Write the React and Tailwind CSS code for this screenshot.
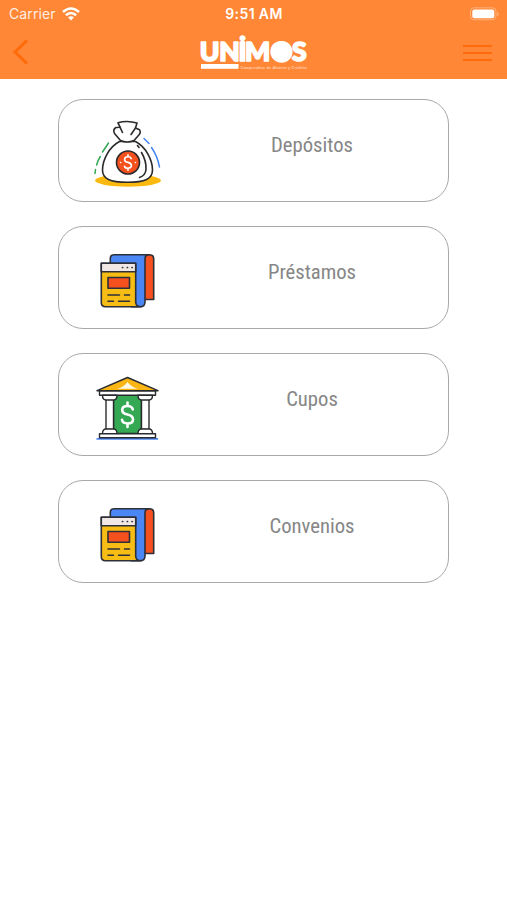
const UnimosLogo = () => (
  <svg
    viewBox="198.5 34 112 37"
    className="w-28 h-[37px]"
    fill="#fff"
    stroke="#fff"
    strokeLinejoin="round"
  >
    <text
      y="61.4"
      x="200.3 219.8 239 245.5 271 292.4"
      fontFamily="Lato, sans-serif"
      fontWeight="900"
      fontSize="26.5"
      strokeWidth="1.7"
    >
      UNİMOS
    </text>
    <circle cx="282.1" cy="51.9" r="10.9" stroke="none" />
    <rect x="201.5" y="64" width="37.5" height="4.8" stroke="none" />
    <text
      x="241"
      y="68.6"
      fontFamily="Lato, sans-serif"
      fontSize="4.2"
      stroke="none"
      opacity="0.75"
      textLength="66"
    >
      Cooperativa de Ahorro y Crédito
    </text>
  </svg>
);

const MoneyBagIcon = () => (
  <svg viewBox="0 0 85 85" className="size-[85px]" fill="none" strokeLinecap="round" strokeLinejoin="round">
    <ellipse cx="43" cy="68.5" rx="33" ry="6.2" fill="#fbb80f" />
    <path d="M23.5 31L17.5 40M15.3 44.5Q12.5 49 11.6 53M10.5 57.5L10 61.5" stroke="#34a853" strokeWidth="1.5" />
    <path d="M59 26.5L64 31.5M66.5 35.5Q72.5 44 74.5 55" stroke="#4285f4" strokeWidth="1.5" />
    <g stroke="#2b2b2d" strokeWidth="1.6">
      <path
        fill="#fff"
        d="M34.5 29.5C24 35 17.5 48 17.5 58C17.5 67 25 70.3 42.5 70.3C60 70.3 67.5 67 67.5 58C67.5 48 61 35 50.5 29.5Z"
      />
      <path
        fill="#fff"
        d="M35.5 28.5L29.5 21.5Q27.5 17.5 31 15.5L35 15.2L33 10.8Q42 8 52 11L50.5 16L54.5 17.7Q56.5 21 53 24L49 28.5Q42 31.5 35.5 28.5Z"
      />
      <path d="M35 15.2L37.5 20.5M50.5 16L46 22.5" />
      <path d="M52.5 33.5L54 35.5M56.5 40.5Q61.5 49 61 57.5Q60.5 63.5 54.5 65.5" />
      <circle cx="43" cy="50.5" r="11.5" fill="#f4511e" />
    </g>
    <path
      d="M46.3 46.6Q45.5 44.8 43 44.8Q39.6 44.8 39.6 47.4Q39.6 49.8 43 50.4Q46.4 51.2 46.4 53.6Q46.4 56.2 43 56.2Q40 56.2 39.5 54.2M43 42.7V44.8M43 56.2V58.3"
      stroke="#fff"
      strokeWidth="1.6"
    />
    <path d="M35.5 50.5H35.7M50.3 50.5H50.5" stroke="#fff" strokeWidth="1.5" />
  </svg>
);

const BookIcon = () => (
  <svg viewBox="0 -1 85 85" className="size-[85px]" fill="none" strokeLinecap="round" strokeLinejoin="round">
    <g stroke="#2d3038" strokeWidth="1.6">
      <path d="M58 14.7H64.5Q68.7 14.7 68.7 19V59.5H58Z" fill="#f4511e" />
      <path d="M29 14.7H64Q60 14.7 60 19V62Q60 66.7 55 66.7H47L25.3 60V18.5Q25.3 14.7 29 14.7Z" fill="#4b86f5" />
      <path d="M16.3 23.3H50.7V62Q50.7 66.7 56 66.7H20.5Q16.3 66.7 16.3 62.5Z" fill="#f7bd15" />
      <path d="M16.3 23.3H50.7V31.7H16.3Z" fill="#f1e8e5" />
      <path d="M23 37.5H44.5V48.3H23Z" fill="#f4511e" />
      <path d="M23 55H34.5M39.5 55H44.5M23 61.3H28.5M33.5 61.3H44.5" />
    </g>
    <path d="M37.5 27.5H37.7M42.3 27.5H42.5M47 27.5H47.2" stroke="#2d3038" strokeWidth="1.7" />
  </svg>
);

const BankIcon = () => (
  <svg viewBox="0 1 85 85" className="size-[85px]" fill="none" strokeLinejoin="round">
    <path d="M11.5 73.9H73" stroke="#4b86f5" strokeWidth="1.6" />
    <g stroke="#292b2e" strokeWidth="1.4">
      <path d="M28.5 30H56.5V68.5H28.5Z" fill="#34a853" />
      <path d="M12 25.7L42.5 12.5L73 25.7Z" fill="#fbb515" />
      <path d="M14.5 26H70.5V30.3H14.5Z" fill="#fff" />
      <path d="M21 34H28.5V64.5H21ZM56.5 34H64V64.5H56.5Z" fill="#fff" />
      <path d="M17.5 30.3H32Q32 35 28.5 35H21Q17.5 35 17.5 30.3ZM53 30.3H67.5Q67.5 35 64 35H56.5Q53 35 53 30.3Z" fill="#fff" />
      <path d="M17.5 68.8Q17.5 64 21 64H28.5Q32 64 32 68.8ZM53 68.8Q53 64 56.5 64H64Q67.5 64 67.5 68.8Z" fill="#fff" />
      <path d="M14.5 68.8H70.5V72.8H14.5Z" fill="#fff" />
    </g>
    <path d="M32 23.8Q39 22 42.5 17Q46 22 53 23.8Z" fill="#fff8e4" />
    <path
      d="M47.8 44.5Q47 41 42.5 41Q37.2 41 37.2 45Q37.2 48.5 42.5 49.5Q48 50.7 48 54.5Q48 58.5 42.5 58.5Q37.5 58.5 37 54.7M42.5 37.5V41M42.5 58.5V62"
      stroke="#fff"
      strokeWidth="2.6"
      strokeLinecap="round"
    />
  </svg>
);

const products = [
  { id: "depositos", title: "Depósitos", icon: <MoneyBagIcon /> },
  { id: "prestamos", title: "Préstamos", icon: <BookIcon /> },
  { id: "cupos", title: "Cupos", icon: <BankIcon /> },
  { id: "convenios", title: "Convenios", icon: <BookIcon /> },
];

const StatusBar = () => (
  <div className="grid grid-cols-3 items-center h-[27px] pl-[9px] pr-2 font-['Inter',sans-serif] text-white">
    <div className="flex items-center gap-1.5">
      <span className="text-[14px] tracking-[0.1px] opacity-85">Carrier</span>
      <svg viewBox="0 0 18 14" className="w-[18px] h-3.5" fill="none" stroke="#fff" strokeWidth="2.6">
        <path d="M1 5Q9 -2 17 5M3.9 8.2Q9 3.8 14.1 8.2" />
        <path d="M6 10.3Q9 8 12 10.3L9 13.5Z" fill="#fff" stroke="none" />
      </svg>
    </div>
    <span className="text-center text-[14px] font-semibold tracking-[0.4px]">9:51 AM</span>
    <svg viewBox="0 0 30 14" className="w-[30px] h-3.5 justify-self-end">
      <rect x="1.5" y="0.8" width="25.5" height="12" rx="3.5" fill="none" stroke="#fff" strokeOpacity="0.35" />
      <rect x="3.3" y="2.4" width="22" height="8.8" rx="2" fill="#fff" />
      <path d="M28.2 5V9Q29.7 8.3 29.7 7T28.2 5Z" fill="#fff" fillOpacity="0.4" />
    </svg>
  </div>
);

const ProductCard = ({ title, icon }) => (
  <button className="flex w-full h-[103px] pl-[26px] pt-3 rounded-[25px] border border-[#a8a8a8] bg-white">
    {icon}
    <span className="flex-1 pl-1.5 pt-[19px] text-center font-['Roboto_Condensed','Roboto',sans-serif] [font-stretch:75%] text-[20.7px] leading-7 text-[#868686]">
      {title}
    </span>
  </button>
);

const App = () => {
  return (
    <div className="min-h-screen bg-white">
      <header className="h-[79px] bg-[#ff8736]">
        <StatusBar />
        <div className="grid grid-cols-3 items-center h-[50px] pl-3 pr-[15px]">
          <svg viewBox="0 0 18 28" className="w-[18px] h-7" fill="none" stroke="#ff6a0a" strokeWidth="3">
            <path d="M15 2.5L3 14L15 25.5" />
          </svg>
          <div className="flex justify-center pl-1">
            <UnimosLogo />
          </div>
          <div className="flex flex-col gap-[5px] justify-self-end w-[29px] pt-0.5">
            <div className="h-[2px] bg-[#ff6a0a]" />
            <div className="h-[2px] bg-[#ff6a0a]" />
            <div className="h-[2px] bg-[#ff6a0a]" />
          </div>
        </div>
      </header>

      <main className="flex flex-col gap-6 pt-5 px-[58px]">
        {products.map((item) => (
          <ProductCard key={item.id} {...item} />
        ))}
      </main>
    </div>
  );
};

export default App;
